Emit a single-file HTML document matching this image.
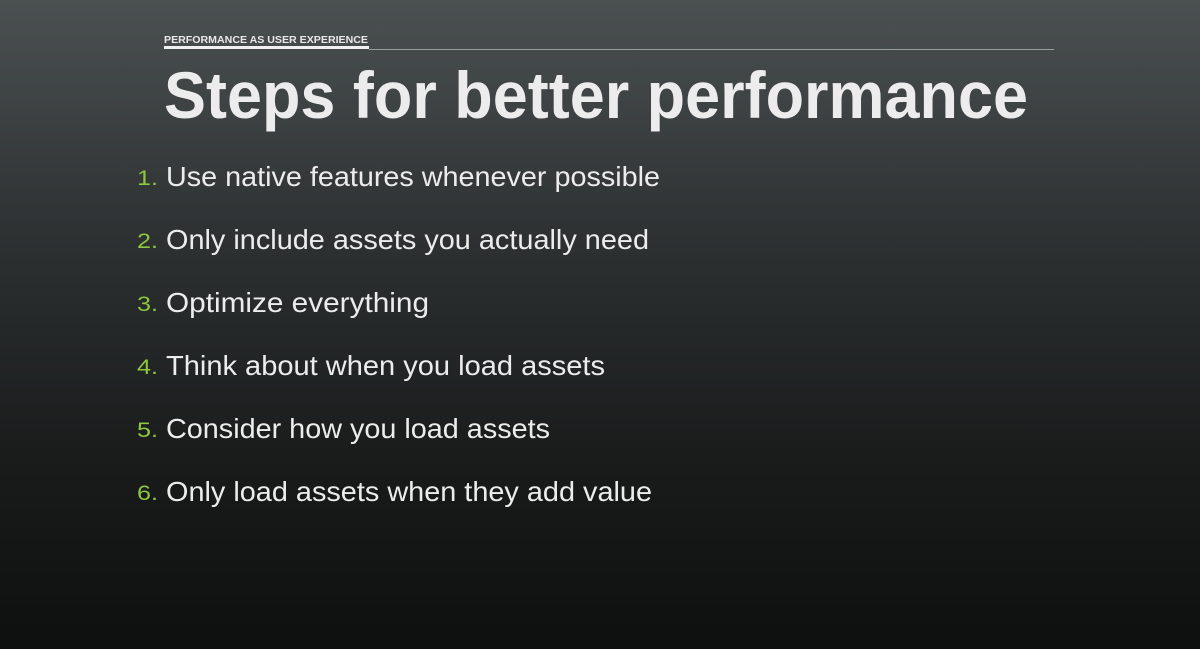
<!DOCTYPE html>
<html><head><meta charset="utf-8"><style>
html,body{margin:0;padding:0;}
body{width:1200px;height:649px;overflow:hidden;background:linear-gradient(to bottom,#4b5051 0%,#2e3233 35%,#1a1c1c 70%,#0e0f0f 100%);}
svg{display:block}
</style></head><body>
<svg width="1200" height="649" xmlns="http://www.w3.org/2000/svg" font-family="'Liberation Sans',sans-serif">
<text x="164" y="43" font-size="10.5" font-weight="bold" fill="#e8e8e8" textLength="204" lengthAdjust="spacingAndGlyphs">PERFORMANCE AS USER EXPERIENCE</text>
<rect x="164" y="46" width="205" height="3" fill="#f0f0f0"/>
<rect x="369" y="49" width="685" height="1" fill="#9a9c9c"/>
<text x="164" y="118" font-size="66" font-weight="bold" fill="#ececec" textLength="864" lengthAdjust="spacingAndGlyphs">Steps for better performance</text>
<g fill="#8dc63f" font-size="21">
<text x="137" y="185" textLength="21" lengthAdjust="spacingAndGlyphs">1.</text>
<text x="137" y="248" textLength="21" lengthAdjust="spacingAndGlyphs">2.</text>
<text x="137" y="311" textLength="21" lengthAdjust="spacingAndGlyphs">3.</text>
<text x="137" y="374" textLength="21" lengthAdjust="spacingAndGlyphs">4.</text>
<text x="137" y="437" textLength="21" lengthAdjust="spacingAndGlyphs">5.</text>
<text x="137" y="500" textLength="21" lengthAdjust="spacingAndGlyphs">6.</text>
</g>
<g fill="#ececec" font-size="28">
<text x="166" y="186" textLength="494" lengthAdjust="spacingAndGlyphs">Use native features whenever possible</text>
<text x="166" y="249" textLength="483" lengthAdjust="spacingAndGlyphs">Only include assets you actually need</text>
<text x="166" y="312" textLength="263" lengthAdjust="spacingAndGlyphs">Optimize everything</text>
<text x="166" y="375" textLength="439" lengthAdjust="spacingAndGlyphs">Think about when you load assets</text>
<text x="166" y="438" textLength="384" lengthAdjust="spacingAndGlyphs">Consider how you load assets</text>
<text x="166" y="501" textLength="486" lengthAdjust="spacingAndGlyphs">Only load assets when they add value</text>
</g>
</svg>
</body></html>
